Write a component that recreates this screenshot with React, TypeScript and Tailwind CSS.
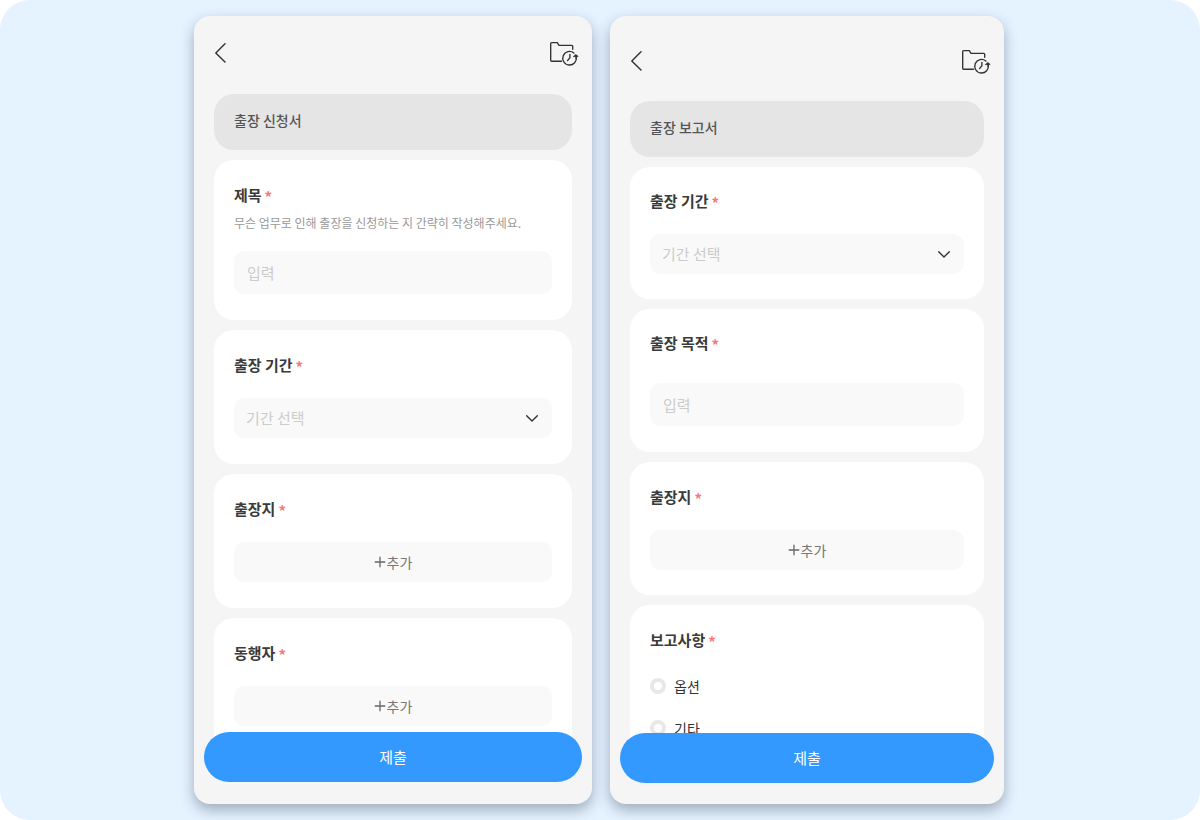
import { useId, type ReactNode } from "react";

function BackIcon() {
  return (
    <svg width="12" height="20" viewBox="0 0 12 20" fill="none" stroke="#333" strokeWidth="1.4" strokeLinecap="round" strokeLinejoin="round" aria-hidden="true">
      <path d="M10 0.8 L0.8 9.9 L10 19" />
    </svg>
  );
}

function FolderHistoryIcon() {
  return (
    <svg width="30" height="28" viewBox="0 0 30 28" fill="none" stroke="#333" strokeWidth="1.35" strokeLinecap="round" strokeLinejoin="round" aria-hidden="true">
      <path d="M12.6 22.2 H2.6 Q1.7 22.2 1.7 21.3 V4.5 Q1.7 3.6 2.6 3.6 H8.3 L10 6.4 H22.8 Q23.7 6.4 23.7 7.3 V10.2" />
      <path d="M24.9 14 A6.8 6.8 0 1 0 27.2 17.8" />
      <path d="M27.2 19.6 Q27.4 18.4 26.9 16.4" />
      <path d="M20.9 15.4 V18.8 L18.5 21.6" />
      <path d="M24.6 17.4 L26.8 15.6 L28.9 17.2 Z" fill="#333" strokeWidth="0.8" />
    </svg>
  );
}

function ChevronIcon() {
  return (
    <svg width="12" height="12" viewBox="0 0 12 12" fill="none" stroke="#333" strokeWidth="1.4" strokeLinecap="round" strokeLinejoin="round" className="pointer-events-none absolute top-1/2 right-[14px] -translate-y-1/2" aria-hidden="true">
      <path d="M0.7 3.7 L6 9 L11.3 3.7" />
    </svg>
  );
}

function PlusIcon() {
  return (
    <svg width="12" height="12" viewBox="0 0 12 12" fill="none" stroke="#666" strokeWidth="1.3" strokeLinecap="round" aria-hidden="true">
      <path d="M6 1.2 V10.8 M1.2 6 H10.8" />
    </svg>
  );
}

function Phone({
  title,
  headerClass,
  submitClass,
  children,
}: {
  title: string;
  headerClass: string;
  submitClass: string;
  children: ReactNode;
}) {
  return (
    <form className="flex min-h-0 min-w-0 flex-col rounded-2xl bg-[#f5f5f5] shadow-[0_6px_14px_rgba(60,75,95,0.42)]" onSubmit={(e) => e.preventDefault()}>
      <header className={headerClass}>
        <button type="button" aria-label="뒤로" className="flex h-8 items-center">
          <BackIcon />
        </button>
        <button type="button" aria-label="기록" className="flex h-8 items-center">
          <FolderHistoryIcon />
        </button>
      </header>
      <div className="flex min-h-0 flex-1 flex-col gap-[10px] overflow-y-auto px-5 [scrollbar-width:none]">
        <h1 className="h-14 shrink-0 rounded-[20px] bg-[#e5e5e5] px-5 pt-[15px] text-[14px] leading-[22px] font-medium text-[#555]">{title}</h1>
        {children}
      </div>
      <button type="submit" className={`relative mx-[10px] -mt-6 h-[50px] shrink-0 rounded-full bg-[#3399ff] text-[15px] text-white ${submitClass}`}>
        제출
      </button>
    </form>
  );
}

function RequiredMark() {
  return <span className="mt-1 text-[#ff7474]">*</span>;
}

const cardClass = "shrink-0 rounded-[20px] bg-white px-5";
const labelClass = "flex h-6 items-center gap-[3px] text-[15px] leading-6 font-bold text-[#3a3a3a]";

function TextCard({ label, hint, className }: { label: string; hint?: string; className: string }) {
  const id = useId();
  return (
    <section className={`${cardClass} ${className}`}>
      <label htmlFor={id} className={labelClass}>
        {label}
        <RequiredMark />
      </label>
      {hint && <p className="mt-[7px] text-[12px] leading-[18px] whitespace-nowrap text-[#999]">{hint}</p>}
      <input
        id={id}
        type="text"
        placeholder="입력"
        className={`${hint ? "mt-[19px]" : "mt-7"} block h-[43px] w-full rounded-[10px] bg-[#f9f9f9] px-[13px] text-[15px] text-[#333] outline-none placeholder:text-[#ccc]`}
      />
    </section>
  );
}

function SelectCard({ label, className }: { label: string; className: string }) {
  const id = useId();
  return (
    <section className={`${cardClass} ${className}`}>
      <label htmlFor={id} className={labelClass}>
        {label}
        <RequiredMark />
      </label>
      <div className="relative mt-[21px]">
        <select id={id} className="block h-10 w-full appearance-none rounded-[10px] bg-[#f9f9f9] px-3 text-[15px] text-[#ccc] outline-none">
          <option>기간 선택</option>
        </select>
        <ChevronIcon />
      </div>
    </section>
  );
}

function AddCard({ label, className }: { label: string; className: string }) {
  const id = useId();
  return (
    <section className={`${cardClass} ${className}`}>
      <h2 id={id} className={labelClass}>
        {label}
        <RequiredMark />
      </h2>
      <button type="button" aria-describedby={id} className="mt-[21px] flex h-10 w-full items-center justify-center gap-px rounded-[10px] bg-[#f9f9f9] text-[14px] text-[#777]">
        <PlusIcon />
        추가
      </button>
    </section>
  );
}

function RadioCard({ label, options, className }: { label: string; options: string[]; className: string }) {
  const name = useId();
  return (
    <fieldset className={`${cardClass} ${className}`}>
      <legend className={`${labelClass} float-left w-full`}>
        {label}
        <RequiredMark />
      </legend>
      <div className="clear-both flex flex-col gap-[18px] pt-[22px]">
        {options.map((option) => (
          <label key={option} className="flex h-6 items-center gap-2 text-[14px] text-[#333]">
            <input type="radio" name={name} className="size-4 appearance-none rounded-full border-4 border-[#e8e8e8] bg-white checked:border-[#3399ff]" />
            {option}
          </label>
        ))}
      </div>
    </fieldset>
  );
}

export default function App() {
  return (
    <div className="bg-white font-['Noto_Sans_CJK_KR',sans-serif]">
      <main className="flex h-screen justify-center rounded-[30px] bg-[#e5f2ff] py-4 pr-[2px]">
        <div className="grid w-full max-w-[810px] grid-cols-[398fr_394fr] grid-rows-[minmax(0,1fr)] gap-[18px]">
          <Phone title="출장 신청서" headerClass="flex shrink-0 items-center justify-between pt-[21px] pr-[13px] pb-[25px] pl-[21px]" submitClass="mb-[22px]">
            <TextCard label="제목" hint="무슨 업무로 인해 출장을 신청하는 지 간략히 작성해주세요." className="pt-[23px] pb-[26px]" />
            <SelectCard label="출장 기간" className="pt-[23px] pb-[26px]" />
            <AddCard label="출장지" className="pt-[23px] pb-[26px]" />
            <AddCard label="동행자" className="pt-[23px] pb-[26px]" />
          </Phone>
          <Phone title="출장 보고서" headerClass="flex shrink-0 items-center justify-between pt-[29px] pr-[13px] pb-6 pl-[21px]" submitClass="mb-[21px]">
            <SelectCard label="출장 기간" className="pt-[22px] pb-[25px]" />
            <TextCard label="출장 목적" className="pt-[22px] pb-[26px]" />
            <AddCard label="출장지" className="pt-[23px] pb-[25px]" />
            <RadioCard label="보고사항" options={["옵션", "기타"]} className="pt-[23px] pb-[25px]" />
          </Phone>
        </div>
      </main>
    </div>
  );
}
